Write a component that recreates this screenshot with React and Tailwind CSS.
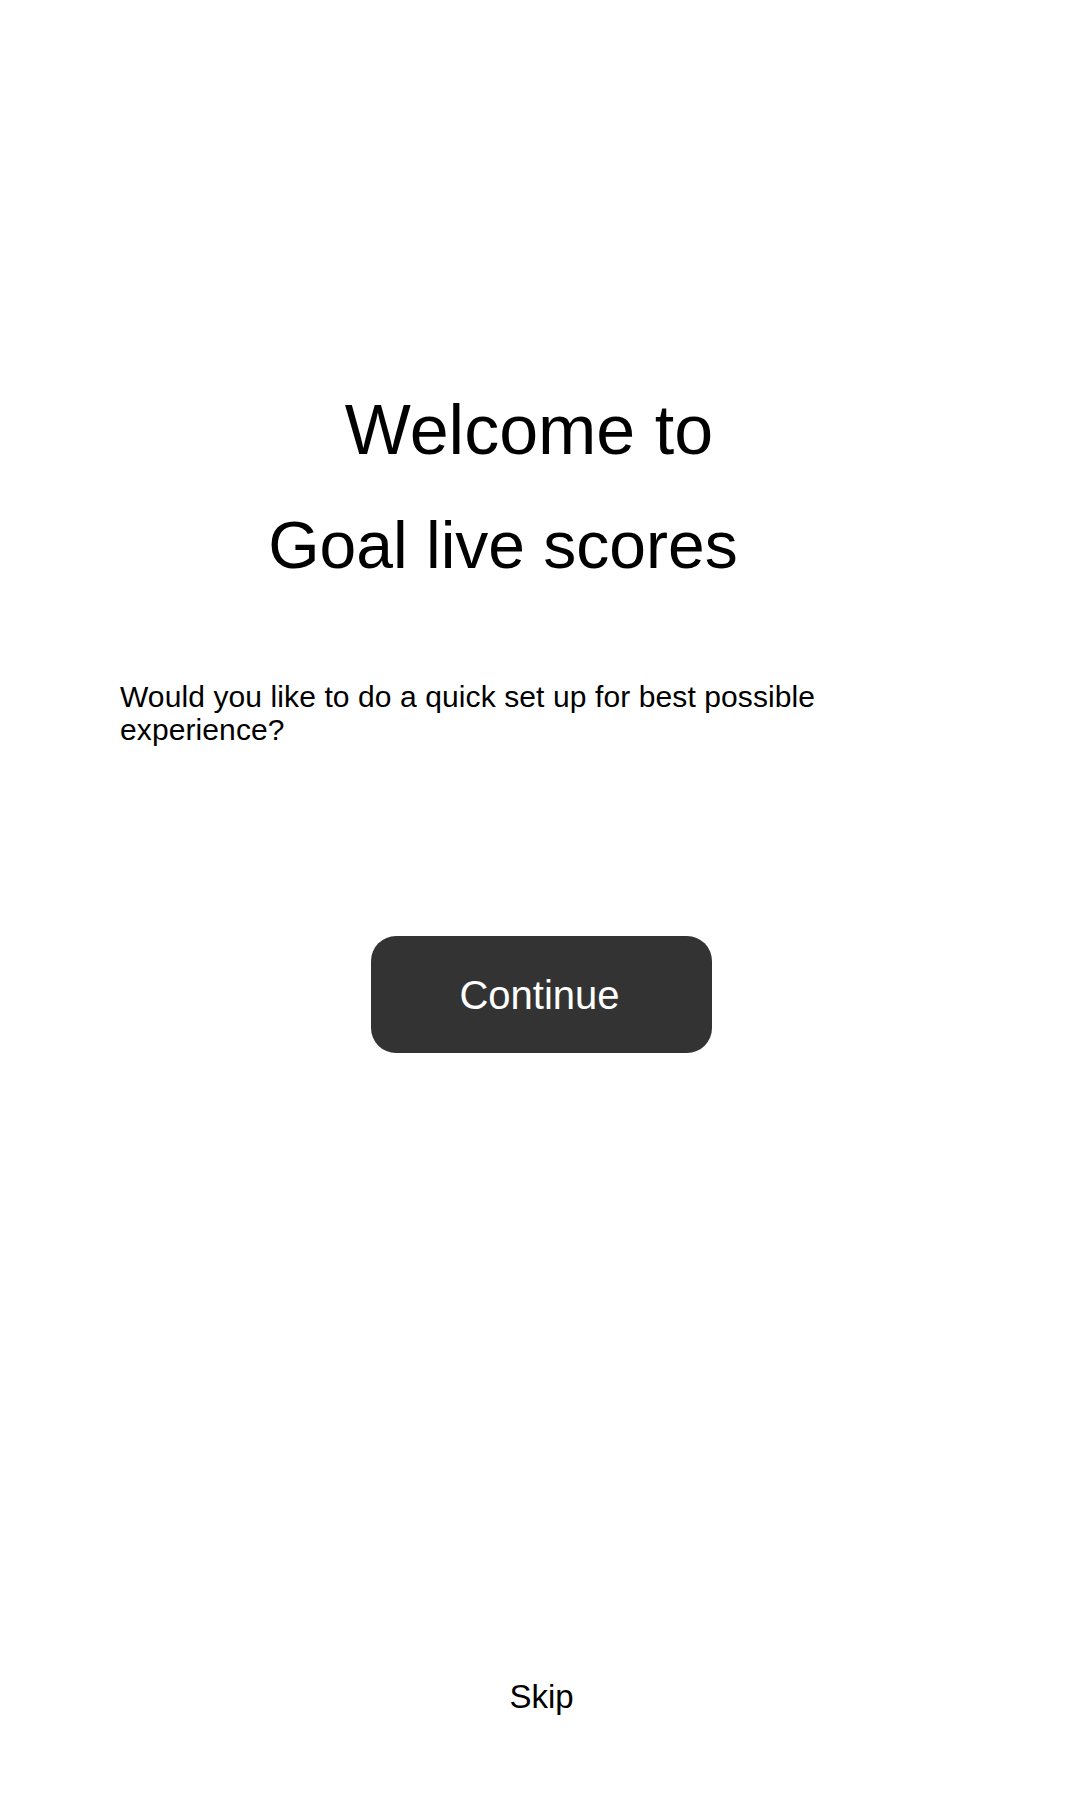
import React from "react";

export default function App() {
  return (
    <div
      className="w-[1080px] h-[1800px] bg-white flex flex-col text-black"
      style={{ fontFamily: '"Liberation Sans", Arial, sans-serif' }}
    >
      <h1 className="mt-[395px] pr-[22px] text-center text-[70px] leading-[70px] font-normal">
        Welcome to
      </h1>
      <h1 className="mt-[47px] pr-[74px] text-center text-[66px] leading-[66px] font-normal">
        Goal live scores
      </h1>
      <p className="mt-[102px] ml-[120px] w-[700px] text-[30px] leading-[33px] tracking-[0.1px]">
        Would you like to do a quick set up for best possible experience?
      </p>
      <button className="mt-[190px] ml-[371px] w-[341px] h-[117px] rounded-[25px] bg-[#333333] text-white text-[40px] leading-none flex items-center justify-center pr-[4px]">
        Continue
      </button>
      <div className="mt-[627px] pl-[3px] text-center text-[33px] leading-[33px]">
        Skip
      </div>
    </div>
  );
}
